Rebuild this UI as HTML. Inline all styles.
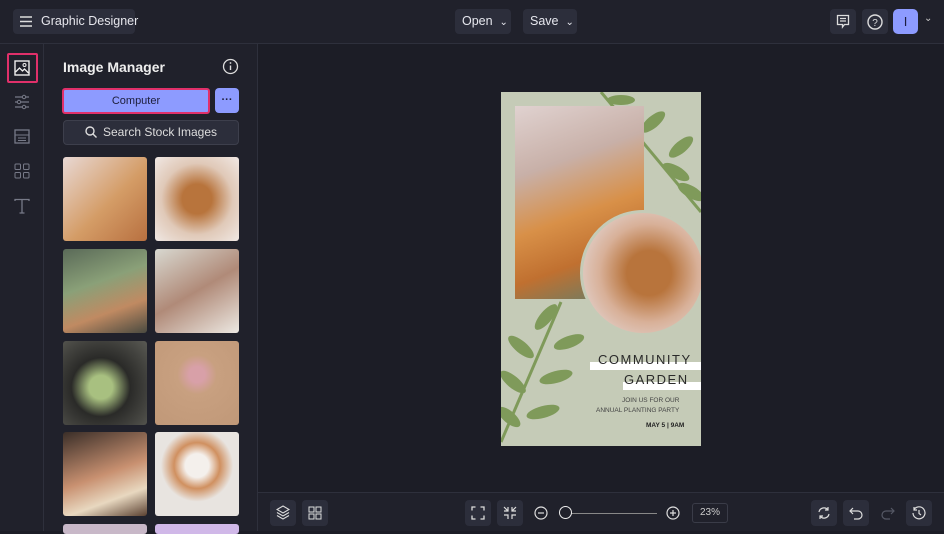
<!DOCTYPE html>
<html><head><style>
*{box-sizing:border-box;margin:0;padding:0}
body{width:944px;height:531px;background:#1c1d26;font-family:"Liberation Sans",sans-serif;color:#e6e7ee;position:relative;overflow:hidden}
.abs{position:absolute}
.btn{position:absolute;background:#2c2e3b;border-radius:4px}
.top{left:0;top:0;width:944px;height:44px;background:#20212b;border-bottom:1px solid #2e303c}
.rail{left:0;top:44px;width:44px;height:487px;background:#20212b;border-right:1px solid #2e303c}
.panel{left:44px;top:44px;width:214px;height:487px;background:#20212b;border-right:1px solid #2e303c}
.bottom{left:258px;top:492px;width:686px;height:39px;background:#20212b;border-top:1px solid #2e303c}
.thumb{position:absolute;width:84px;height:84px;border-radius:3px}
svg{display:block}
</style></head><body>
<div class="abs top"></div>
<div class="btn" style="left:13px;top:9px;width:122px;height:25px"></div>
<svg class="abs" style="left:19px;top:15px" width="14" height="13"><path d="M1 2h12M1 6.5h12M1 11h12" stroke="#ddd" stroke-width="1.5"/></svg>
<div class="abs" style="left:41px;top:14px;font-size:12.5px;color:#e6e6ec">Graphic Designer</div>
<div class="btn" style="left:455px;top:9px;width:56px;height:25px"></div>
<div class="abs" style="left:462px;top:14px;font-size:12.5px">Open&nbsp; <span style="font-size:10px">⌄</span></div>
<div class="btn" style="left:523px;top:9px;width:54px;height:25px"></div>
<div class="abs" style="left:530px;top:14px;font-size:12.5px">Save&nbsp; <span style="font-size:10px">⌄</span></div>
<div class="btn" style="left:830px;top:9px;width:26px;height:25px"></div>
<svg class="abs" style="left:836px;top:14px" width="14" height="15"><path d="M1.5 1.5h11v9h-4l-2 2.5v-2.5h-5z M4 4.5h6M4 7h6" fill="none" stroke="#ddd" stroke-width="1.3"/></svg>
<div class="btn" style="left:862px;top:9px;width:26px;height:25px"></div>
<svg class="abs" style="left:866px;top:13px" width="18" height="18"><circle cx="9" cy="9" r="7" fill="none" stroke="#ddd" stroke-width="1.4"/><text x="9" y="13" font-size="10" text-anchor="middle" fill="#ddd" font-family="Liberation Sans">?</text></svg>
<div class="abs" style="left:893px;top:9px;width:25px;height:25px;background:#8d9bff;border-radius:5px;color:#1c1d40;font-size:13px;text-align:center;line-height:25px">I</div>
<div class="abs" style="left:924px;top:13px;font-size:10px;color:#ccc">⌄</div>

<div class="abs rail"></div>
<div class="abs" style="left:7px;top:53px;width:31px;height:30px;border:2px solid #e0306a;border-radius:2px"></div>
<svg class="abs" style="left:14px;top:60px" width="16" height="16"><rect x="1" y="1" width="14" height="14" fill="none" stroke="#eee" stroke-width="1.4"/><circle cx="10.5" cy="5" r="1.5" fill="none" stroke="#eee"/><path d="M1.5 12l4-4 3 3 2-2 4 4" fill="none" stroke="#eee" stroke-width="1.3"/></svg>
<svg class="abs" style="left:14px;top:94px" width="16" height="16"><path d="M1 3h14M1 8h14M1 13h14" stroke="#777a88" stroke-width="1.2"/><circle cx="10" cy="3" r="1.7" fill="#20212b" stroke="#777a88"/><circle cx="5" cy="8" r="1.7" fill="#20212b" stroke="#777a88"/><circle cx="10" cy="13" r="1.7" fill="#20212b" stroke="#777a88"/></svg>
<svg class="abs" style="left:14px;top:129px" width="16" height="15"><rect x="1" y="1" width="14" height="13" fill="none" stroke="#777a88" stroke-width="1.3"/><path d="M1 6h14M4 9h8M4 11.5h8" stroke="#777a88"/></svg>
<svg class="abs" style="left:14px;top:163px" width="16" height="16"><rect x="1" y="1" width="5.5" height="5.5" rx="1" fill="none" stroke="#777a88"/><rect x="9.5" y="1" width="5.5" height="5.5" rx="1" fill="none" stroke="#777a88"/><rect x="1" y="9.5" width="5.5" height="5.5" rx="1" fill="none" stroke="#777a88"/><rect x="9.5" y="9.5" width="5.5" height="5.5" rx="1" fill="none" stroke="#777a88"/></svg>
<svg class="abs" style="left:14px;top:198px" width="16" height="16"><path d="M1 3V1.5h14V3M8 1.5V15M5.5 15h5" fill="none" stroke="#777a88" stroke-width="1.3"/></svg>

<div class="abs panel"></div>
<div class="abs" style="left:63px;top:59px;font-size:14px;font-weight:bold;color:#eee">Image Manager</div>
<svg class="abs" style="left:222px;top:58px" width="17" height="17"><circle cx="8.5" cy="8.5" r="7" fill="none" stroke="#ddd" stroke-width="1.3"/><path d="M8.5 7.5v4.5" stroke="#ddd" stroke-width="1.4"/><circle cx="8.5" cy="5" r="0.9" fill="#ddd"/></svg>
<div class="abs" style="left:62px;top:88px;width:148px;height:26px;background:#8d9bff;border:2px solid #e0306a;border-radius:3px;color:#1d1e3a;font-size:11px;text-align:center;line-height:22px">Computer</div>
<div class="abs" style="left:215px;top:88px;width:24px;height:25px;background:#8d9bff;border-radius:4px;color:#1d1e3a;font-size:11px;text-align:center;line-height:24px;font-weight:bold">···</div>
<div class="abs" style="left:63px;top:120px;width:176px;height:25px;background:#2c2e3b;border:1px solid #3d3f4c;border-radius:4px;font-size:12px;color:#ddd;text-align:center;line-height:23px">
<svg style="display:inline-block;vertical-align:-2px;margin-right:6px" width="12" height="12"><circle cx="5" cy="5" r="4" fill="none" stroke="#ddd" stroke-width="1.4"/><path d="M8 8l3.5 3.5" stroke="#ddd" stroke-width="1.4"/></svg>Search Stock Images</div>

<div class="thumb" style="left:63px;top:157px;background:linear-gradient(135deg,#e8d8d4,#d49c66 55%,#b87040)"></div>
<div class="thumb" style="left:155px;top:157px;background:radial-gradient(circle at 50% 50%,#b8743c 25%,#e0c9b8 60%,#f0e8e4)"></div>
<div class="thumb" style="left:63px;top:249px;background:linear-gradient(160deg,#5a6a58,#8aa078 40%,#c08a62 70%,#4a4a40)"></div>
<div class="thumb" style="left:155px;top:249px;background:linear-gradient(150deg,#d8d8d0,#b08a78 50%,#ece8e2)"></div>
<div class="thumb" style="left:63px;top:341px;background:radial-gradient(circle at 45% 55%,#a8c080 18%,#2a2a28 45%,#5a5a54)"></div>
<div class="thumb" style="left:155px;top:341px;background:radial-gradient(circle at 50% 40%,#d8a0a8 12%,#c8a080 30%,#c09878)"></div>
<div class="thumb" style="left:63px;top:432px;background:linear-gradient(160deg,#3a2e28,#c89070 50%,#e8d8c0 75%,#5a4030)"></div>
<div class="thumb" style="left:155px;top:432px;background:radial-gradient(circle at 50% 40%,#f4f0ec 18%,#d09060 35%,#e8e4e0 55%)"></div>
<div class="thumb" style="left:63px;top:524px;height:10px;background:#c8b8c8"></div>
<div class="thumb" style="left:155px;top:524px;height:10px;background:#d0b8e8"></div>

<div class="abs" style="left:501px;top:92px;width:200px;height:354px;background:#c5cbb7;overflow:hidden">
<svg class="abs" style="left:0;top:0" width="200" height="354">
<g fill="#7f9a5a"><path d="M100 0 L200 120" stroke="#7f9a5a" stroke-width="3" fill="none"/>
<ellipse cx="120" cy="8" rx="14" ry="5"/><ellipse cx="152" cy="30" rx="15" ry="6" transform="rotate(-40 152 30)"/><ellipse cx="180" cy="55" rx="15" ry="6" transform="rotate(-40 180 55)"/><ellipse cx="175" cy="80" rx="15" ry="6" transform="rotate(30 175 80)"/><ellipse cx="190" cy="100" rx="15" ry="6" transform="rotate(30 190 100)"/>
<path d="M0 350 L60 210" stroke="#7f9a5a" stroke-width="3" fill="none"/>
<ellipse cx="45" cy="225" rx="16" ry="6" transform="rotate(-50 45 225)"/><ellipse cx="68" cy="250" rx="16" ry="6" transform="rotate(-20 68 250)"/><ellipse cx="20" cy="255" rx="16" ry="6" transform="rotate(40 20 255)"/><ellipse cx="55" cy="285" rx="17" ry="6" transform="rotate(-15 55 285)"/><ellipse cx="12" cy="290" rx="16" ry="6" transform="rotate(40 12 290)"/><ellipse cx="42" cy="320" rx="17" ry="6" transform="rotate(-15 42 320)"/><ellipse cx="8" cy="325" rx="14" ry="6" transform="rotate(40 8 325)"/></g>
</svg>
<div class="abs" style="left:14px;top:14px;width:129px;height:193px;background:linear-gradient(160deg,#e0d2d0,#c8b0a8 30%,#d89048 55%,#c07030 75%,#5a8070)"></div>
<div class="abs" style="left:79px;top:118px;width:126px;height:126px;border-radius:50%;background:radial-gradient(circle at 55% 50%,#b8743c 25%,#d8b098 55%,#e8e4ea);border:3px solid #c5cbb7"></div>
<div class="abs" style="left:89px;top:270px;width:111px;height:8px;background:#fff"></div>
<div class="abs" style="left:122px;top:290px;width:78px;height:8px;background:#fff"></div>
<div class="abs" style="left:97px;top:260px;font-size:13px;letter-spacing:1.5px;color:#2a2a2a">COMMUNITY</div>
<div class="abs" style="left:123px;top:280px;font-size:13px;letter-spacing:1.5px;color:#2a2a2a">GARDEN</div>
<div class="abs" style="left:121px;top:305px;font-size:6.5px;color:#444">JOIN US FOR OUR</div>
<div class="abs" style="left:95px;top:315px;font-size:6.5px;color:#444">ANNUAL PLANTING PARTY</div>
<div class="abs" style="left:145px;top:330px;font-size:6.5px;font-weight:bold;color:#222">MAY 5 | 9AM</div>
</div>

<div class="abs bottom"></div>
<div class="btn" style="left:270px;top:500px;width:26px;height:26px"></div>
<svg class="abs" style="left:276px;top:505px" width="14" height="15"><path d="M7 1l6 3.5-6 3.5-6-3.5zM1 7.5l6 3.5 6-3.5M1 10.5l6 3.5 6-3.5" fill="none" stroke="#ddd" stroke-width="1.1"/></svg>
<div class="btn" style="left:302px;top:500px;width:26px;height:26px"></div>
<svg class="abs" style="left:308px;top:506px" width="14" height="14"><rect x="1" y="1" width="5" height="5" fill="none" stroke="#ddd"/><rect x="8" y="1" width="5" height="5" fill="none" stroke="#ddd"/><rect x="1" y="8" width="5" height="5" fill="none" stroke="#ddd"/><rect x="8" y="8" width="5" height="5" fill="none" stroke="#ddd"/></svg>
<div class="btn" style="left:465px;top:500px;width:26px;height:26px"></div>
<svg class="abs" style="left:471px;top:506px" width="14" height="14"><path d="M1 4.5V1h3.5M9.5 1H13v3.5M13 9.5V13H9.5M4.5 13H1V9.5" fill="none" stroke="#ddd" stroke-width="1.3"/></svg>
<div class="btn" style="left:497px;top:500px;width:26px;height:26px"></div>
<svg class="abs" style="left:503px;top:506px" width="14" height="14"><path d="M1 5h4V1M13 5H9V1M1 9h4v4M13 9H9v4M5 5L1 1M9 5l4-4" fill="none" stroke="#ddd" stroke-width="1.2"/></svg>
<svg class="abs" style="left:534px;top:506px" width="14" height="14"><circle cx="7" cy="7" r="6" fill="none" stroke="#ddd" stroke-width="1.2"/><path d="M4 7h6" stroke="#ddd" stroke-width="1.2"/></svg>
<div class="abs" style="left:565px;top:513px;width:92px;height:1px;background:#888"></div>
<div class="abs" style="left:559px;top:506px;width:13px;height:13px;border-radius:50%;border:1.5px solid #eee;background:#20212b"></div>
<svg class="abs" style="left:666px;top:506px" width="14" height="14"><circle cx="7" cy="7" r="6" fill="none" stroke="#ddd" stroke-width="1.2"/><path d="M4 7h6M7 4v6" stroke="#ddd" stroke-width="1.2"/></svg>
<div class="abs" style="left:692px;top:503px;width:36px;height:20px;border:1px solid #3a3c48;border-radius:3px;font-size:10px;color:#ccc;text-align:center;line-height:18px">23%</div>
<div class="btn" style="left:811px;top:500px;width:26px;height:26px"></div>
<svg class="abs" style="left:817px;top:506px" width="14" height="14"><path d="M2 6a5 5 0 0 1 9-2M12 8a5 5 0 0 1-9 2M11 1v3H8M3 13v-3h3" fill="none" stroke="#ddd" stroke-width="1.2"/></svg>
<div class="btn" style="left:843px;top:500px;width:26px;height:26px"></div>
<svg class="abs" style="left:849px;top:506px" width="14" height="14"><path d="M4 2L1 5l3 3M1 5h8a4 4 0 0 1 0 8H5" fill="none" stroke="#ddd" stroke-width="1.2"/></svg>
<svg class="abs" style="left:881px;top:506px" width="14" height="14"><path d="M10 2l3 3-3 3M13 5H5a4 4 0 0 0 0 8h4" fill="none" stroke="#555865" stroke-width="1.2"/></svg>
<div class="btn" style="left:906px;top:500px;width:26px;height:26px"></div>
<svg class="abs" style="left:912px;top:506px" width="14" height="14"><path d="M2 3.5A6 6 0 1 1 1 7M2 1v3h3M7 4v3.5l2 1.5" fill="none" stroke="#ddd" stroke-width="1.2"/></svg>
</body></html>
